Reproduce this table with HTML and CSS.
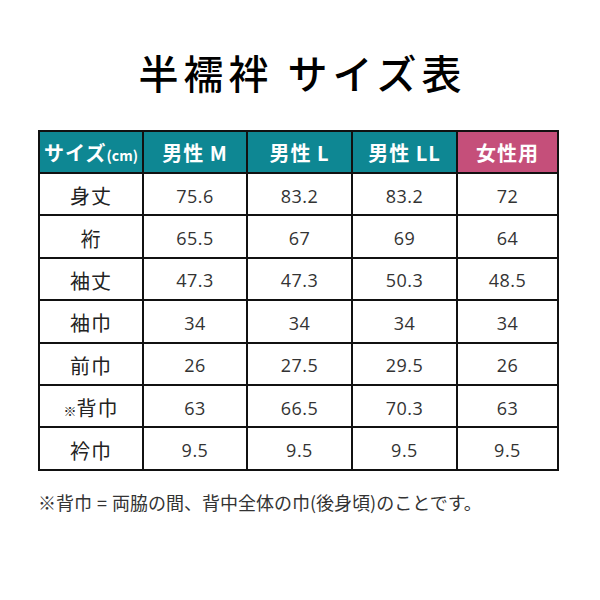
FILE: index.html
```html
<!DOCTYPE html>
<html lang="ja">
<head>
<meta charset="utf-8">
<link rel="stylesheet" href="styles.css">
</head>
<body>
<div class="page">
  <h1 class="title">半襦袢 サイズ表</h1>
  <table class="size-table">
    <colgroup>
      <col class="c1"><col class="c2"><col class="c3"><col class="c4"><col class="c5">
    </colgroup>
    <thead>
      <tr>
        <th class="teal">サイズ<span class="unit">(cm)</span></th>
        <th class="teal">男性 M</th>
        <th class="teal">男性 L</th>
        <th class="teal">男性 LL</th>
        <th class="pink">女性用</th>
      </tr>
    </thead>
    <tbody>
      <tr><td class="label">身丈</td><td>75.6</td><td>83.2</td><td>83.2</td><td>72</td></tr>
      <tr><td class="label">裄</td><td>65.5</td><td>67</td><td>69</td><td>64</td></tr>
      <tr><td class="label">袖丈</td><td>47.3</td><td>47.3</td><td>50.3</td><td>48.5</td></tr>
      <tr><td class="label">袖巾</td><td>34</td><td>34</td><td>34</td><td>34</td></tr>
      <tr><td class="label">前巾</td><td>26</td><td>27.5</td><td>29.5</td><td>26</td></tr>
      <tr><td class="label"><span class="mark">※</span>背巾</td><td>63</td><td>66.5</td><td>70.3</td><td>63</td></tr>
      <tr><td class="label">衿巾</td><td>9.5</td><td>9.5</td><td>9.5</td><td>9.5</td></tr>
    </tbody>
  </table>
  <p class="note">※背巾<span class="eq">=</span>両脇の間、背中全体の巾(後身頃)のことです。</p>
</div>
</body>
</html>
```
FILE: styles.css
```css
html, body {
  margin: 0;
  padding: 0;
  background: #fff;
}
body {
  font-family: "Noto Sans CJK JP", "Noto Sans", sans-serif;
  color: #333;
}
.page {
  width: 600px;
  height: 600px;
  padding-top: 42px;
  box-sizing: border-box;
}
.title {
  margin: 0;
  text-align: center;
  font-size: 40px;
  font-weight: 500;
  color: #000;
  line-height: 60px;
  letter-spacing: 5px;
  padding-left: 5px;
}
.size-table {
  margin: 28px 0 0 38px;
  width: 519px;
  border-collapse: collapse;
  border: 2px solid #111;
  table-layout: fixed;
}
.c1 { width: 104px; }
.c2 { width: 104px; }
.c3 { width: 105px; }
.c4 { width: 105px; }
.c5 { width: 101px; }
th, td {
  border: 2px solid #111;
  text-align: center;
  padding: 0;
}
th {
  height: 40px;
  color: #fff;
  font-size: 20px;
  font-weight: 700;
  letter-spacing: 1px;
  font-family: "Noto Sans CJK JP", sans-serif;
}
th.teal { background: #0e8793; }
th.pink { background: #c54f7a; }
.unit {
  font-size: 14px;
  letter-spacing: 0;
}
td {
  height: 37.4px;
  padding-top: 3px;
  font-size: 18px;
  font-family: "Open Sans", "Noto Sans CJK JP", sans-serif;
  color: #333;
  letter-spacing: 0.5px;
}
td.label {
  font-family: "Noto Sans CJK JP", sans-serif;
  font-size: 20px;
  color: #222;
  letter-spacing: 1px;
}
.mark {
  font-size: 13px;
  letter-spacing: 0;
}
.note {
  margin: 20px 0 0 38px;
  font-size: 18px;
  color: #333;
  line-height: 22px;
}
.eq {
  margin: 0 5px;
}
```
